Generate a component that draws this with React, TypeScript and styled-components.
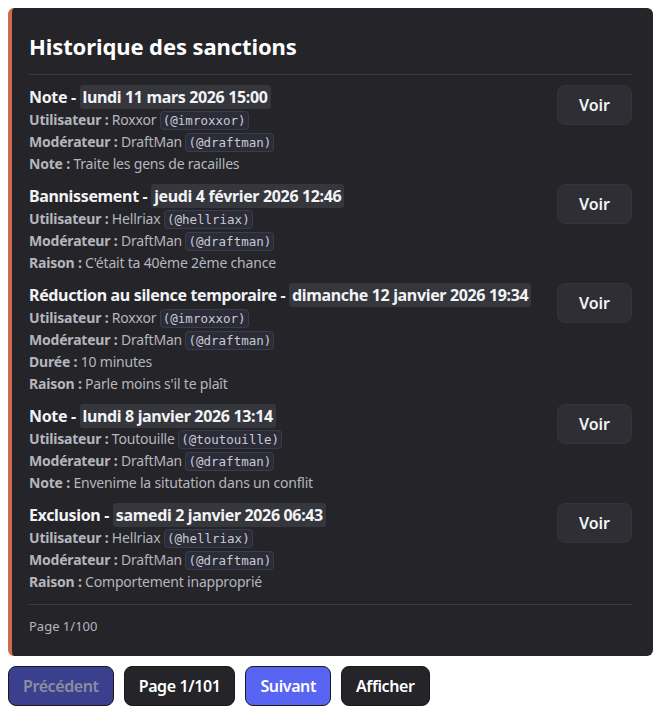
import styled, { createGlobalStyle } from "styled-components";

const GlobalStyle = createGlobalStyle`
  body {
    margin: 8px;
    background: #ffffff;
    font-family: "Noto Sans", "Open Sans", sans-serif;
  }
`;

interface IField {
  label: string;
  value: string;
  tag?: string;
}

interface ISanction {
  type: string;
  date: string;
  fields: IField[];
}

const sanctions: ISanction[] = [
  {
    type: "Note",
    date: "lundi 11 mars 2026 15:00",
    fields: [
      { label: "Utilisateur", value: "Roxxor", tag: "(@imroxxor)" },
      { label: "Modérateur", value: "DraftMan", tag: "(@draftman)" },
      { label: "Note", value: "Traite les gens de racailles" },
    ],
  },
  {
    type: "Bannissement",
    date: "jeudi 4 février 2026 12:46",
    fields: [
      { label: "Utilisateur", value: "Hellriax", tag: "(@hellriax)" },
      { label: "Modérateur", value: "DraftMan", tag: "(@draftman)" },
      { label: "Raison", value: "C'était ta 40ème 2ème chance" },
    ],
  },
  {
    type: "Réduction au silence temporaire",
    date: "dimanche 12 janvier 2026 19:34",
    fields: [
      { label: "Utilisateur", value: "Roxxor", tag: "(@imroxxor)" },
      { label: "Modérateur", value: "DraftMan", tag: "(@draftman)" },
      { label: "Durée", value: "10 minutes" },
      { label: "Raison", value: "Parle moins s'il te plaît" },
    ],
  },
  {
    type: "Note",
    date: "lundi 8 janvier 2026 13:14",
    fields: [
      { label: "Utilisateur", value: "Toutouille", tag: "(@toutouille)" },
      { label: "Modérateur", value: "DraftMan", tag: "(@draftman)" },
      { label: "Note", value: "Envenime la situtation dans un conflit" },
    ],
  },
  {
    type: "Exclusion",
    date: "samedi 2 janvier 2026 06:43",
    fields: [
      { label: "Utilisateur", value: "Hellriax", tag: "(@hellriax)" },
      { label: "Modérateur", value: "DraftMan", tag: "(@draftman)" },
      { label: "Raison", value: "Comportement inapproprié" },
    ],
  },
];

export default function App() {
  return (
    <>
      <GlobalStyle />
      <Embed>
        <Title>Historique des sanctions</Title>
        <Separator />
        <List>
          {sanctions.map((s, i) => (
            <Entry key={i}>
              <EntryText>
                <EntryHeader>
                  {s.type} - <Stamp>{s.date}</Stamp>
                </EntryHeader>
                {s.fields.map((f) => (
                  <FieldLine key={f.label}>
                    <FieldLabel>{f.label} :</FieldLabel> {f.value}
                    {f.tag && <> <Mention>{f.tag}</Mention></>}
                  </FieldLine>
                ))}
              </EntryText>
              <ViewButton>Voir</ViewButton>
            </Entry>
          ))}
        </List>
        <Separator />
        <Footer>Page 1/100</Footer>
      </Embed>
      <ActionRow>
        <ActionButton $variant="primary" disabled>
          Précédent
        </ActionButton>
        <ActionButton $variant="dark">Page 1/101</ActionButton>
        <ActionButton $variant="primary">Suivant</ActionButton>
        <ActionButton $variant="dark">Afficher</ActionButton>
      </ActionRow>
    </>
  );
}

const Embed = styled.div`
  width: 645px;
  box-sizing: border-box;
  background: #242429;
  border-left: 4px solid #cc6b50;
  border-radius: 6px;
  padding: 24px 21px 21px 17px;
  color: #dbdee1;
`;

const Title = styled.div`
  font-size: 22px;
  font-weight: 700;
  color: #ffffff;
  line-height: 28px;
  margin-bottom: 14px;
  letter-spacing: -0.1px;
`;

const Separator = styled.div`
  height: 1px;
  background: #3a3a40;
`;

const List = styled.div`
  display: flex;
  flex-direction: column;
  gap: 10px;
  padding: 11px 0 11px;
`;

const Entry = styled.div`
  display: flex;
  justify-content: space-between;
  align-items: flex-start;
  gap: 12px;
`;

const EntryText = styled.div`
  flex: 1;
  min-width: 0;
  display: flex;
  flex-direction: column;
`;

const EntryHeader = styled.div`
  font-size: 16px;
  font-weight: 700;
  color: #f2f3f5;
  line-height: 22px;
  height: 23px;
  white-space: nowrap;
  letter-spacing: -0.35px;
`;

const Stamp = styled.span`
  background: #36363d;
  border-radius: 3px;
  padding: 1px 3px;
`;

const FieldLine = styled.div`
  font-size: 14px;
  line-height: 22px;
  height: 22px;
  color: #b5b6bd;
  white-space: nowrap;
  letter-spacing: -0.2px;
`;

const FieldLabel = styled.span`
  font-weight: 700;
`;

const Mention = styled.span`
  font-family: "DejaVu Sans Mono", monospace;
  font-size: 12.5px;
  line-height: 1;
  letter-spacing: 0;
  background: #2b2c38;
  border: 1px solid #3a3c4c;
  border-radius: 4px;
  padding: 1px 2px;
  color: #c8cad3;
`;

const ViewButton = styled.button`
  flex: none;
  width: 75px;
  height: 40px;
  margin-top: -1px;
  border-radius: 8px;
  border: 1px solid #34343b;
  background: #2e2e34;
  color: #f2f3f5;
  font-family: inherit;
  font-size: 16px;
  font-weight: 600;
`;

const Footer = styled.div`
  font-size: 13px;
  line-height: 18px;
  color: #b5b6bd;
  padding-top: 12px;
`;

const ActionRow = styled.div`
  display: flex;
  gap: 10px;
  margin-top: 10px;
`;

const ActionButton = styled.button<{ $variant: "primary" | "dark" }>`
  height: 40px;
  padding: 0 14px;
  border-radius: 8px;
  border: 1px solid #1a1a1e;
  font-family: inherit;
  font-size: 16px;
  font-weight: 600;
  letter-spacing: -0.4px;
  color: #ffffff;
  background: ${(p) => (p.$variant === "primary" ? "#5865f2" : "#242429")};
  &:disabled {
    background: #3b408e;
    color: #8b8da0;
  }
`;
